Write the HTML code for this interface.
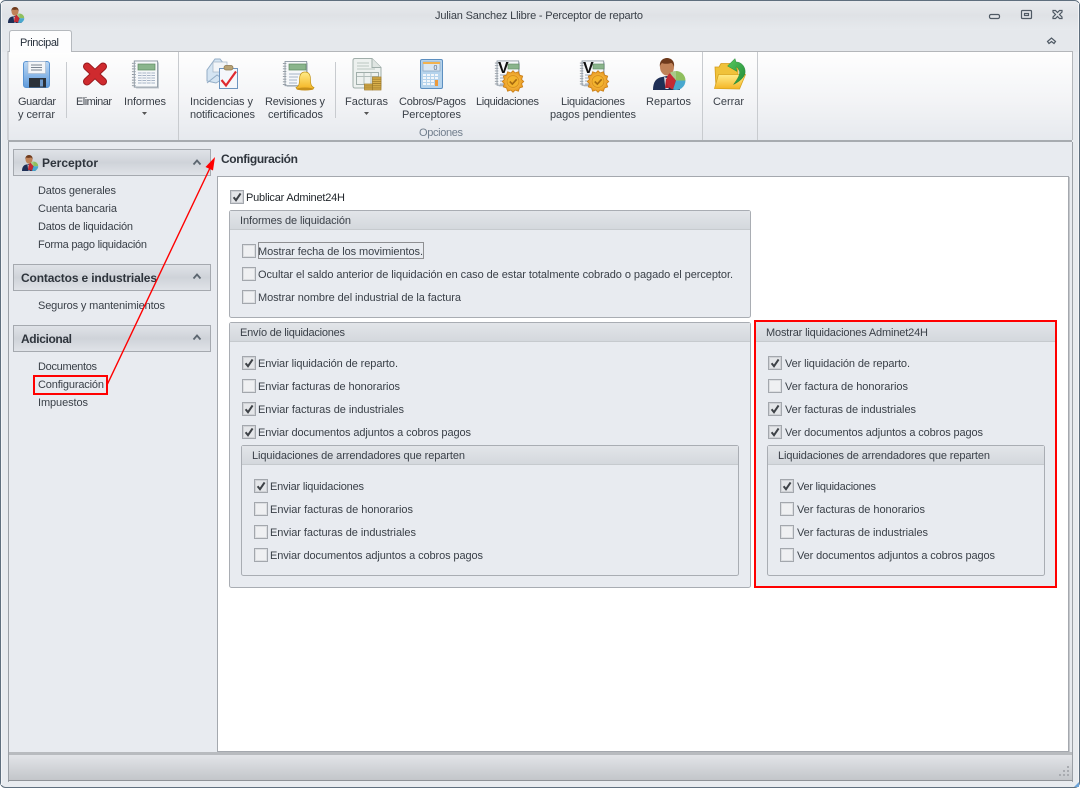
<!DOCTYPE html>
<html lang="es"><head><meta charset="utf-8"><title>Julian Sanchez Llibre - Perceptor de reparto</title>
<style>
html,body{margin:0;padding:0;background:#fff;width:1080px;height:788px;overflow:hidden}
svg{display:block}
text{font-family:"Liberation Sans",sans-serif;font-size:11px;fill:#3a4048;white-space:pre}
.b{font-weight:bold;font-size:12px;fill:#2e343c}
</style></head><body>
<svg width="1080" height="788" viewBox="0 0 1080 788" xmlns="http://www.w3.org/2000/svg">
<defs>
<linearGradient id="tb" x1="0" y1="0" x2="0" y2="1"><stop offset="0" stop-color="#e9ebee"/><stop offset=".5" stop-color="#dfe2e6"/><stop offset="1" stop-color="#e6e9ed"/></linearGradient>
<linearGradient id="rb" x1="0" y1="0" x2="0" y2="1"><stop offset="0" stop-color="#fefefe"/><stop offset=".55" stop-color="#f3f4f6"/><stop offset="1" stop-color="#e6e9ee"/></linearGradient>
<linearGradient id="hd" x1="0" y1="0" x2="0" y2="1"><stop offset="0" stop-color="#e0e3e8"/><stop offset=".5" stop-color="#cfd3d9"/><stop offset="1" stop-color="#e0e3e8"/></linearGradient>
<linearGradient id="gh" x1="0" y1="0" x2="0" y2="1"><stop offset="0" stop-color="#e2e5e9"/><stop offset="1" stop-color="#d4d8dd"/></linearGradient>
<linearGradient id="st" x1="0" y1="0" x2="0" y2="1"><stop offset="0" stop-color="#e2e4e8"/><stop offset="1" stop-color="#c3c6ca"/></linearGradient>
<linearGradient id="blue" x1="0" y1="0" x2="0" y2="1"><stop offset="0" stop-color="#bcd8f4"/><stop offset="1" stop-color="#5f9bdc"/></linearGradient>
<linearGradient id="gold" x1="0" y1="0" x2="0" y2="1"><stop offset="0" stop-color="#ffec88"/><stop offset="1" stop-color="#f4b424"/></linearGradient>
<linearGradient id="grn" x1="0" y1="0" x2="1" y2="1"><stop offset="0" stop-color="#58c95e"/><stop offset="1" stop-color="#1f8a38"/></linearGradient>
<linearGradient id="red" x1="0" y1="0" x2="0" y2="1"><stop offset="0" stop-color="#e04040"/><stop offset="1" stop-color="#b81c20"/></linearGradient>
<radialGradient id="bad"><stop offset="0" stop-color="#ffd75e"/><stop offset="1" stop-color="#e8961e"/></radialGradient>

<symbol id="cb" viewBox="0 0 14 14" overflow="visible"><rect x=".5" y=".5" width="13" height="13" fill="#eceef1" stroke="#a3a7ad"/><rect x="1.500" y="1.500" width="11" height="11" fill="#eff0f2" stroke="#dcdee1"/></symbol>
<symbol id="cc" viewBox="0 0 14 14" overflow="visible"><rect x=".5" y=".5" width="13" height="13" fill="#dfe1e4" stroke="#a3a7ad"/><rect x="1.500" y="1.500" width="11" height="11" fill="#e4e6e9" stroke="#d0d2d6"/><path d="M3.600 7.200L6 10.200 10.600 3.400" fill="none" stroke="#3e4247" stroke-width="2"/></symbol>

<symbol id="note" viewBox="0 0 30 30" overflow="visible">
<rect x="3.500" y=".5" width="25" height="28" fill="#f6f8fa" stroke="#8a95a0"/>
<path d="M29.500 2v27.500h-24" fill="none" stroke="#c0c7ce"/>
<path d="M1 3h4M1 6h4M1 9h4M1 12h4M1 15h4M1 18h4M1 21h4M1 24h4M1 27h4" stroke="#8a939c" stroke-width="1" stroke-dasharray="2 1"/>
</symbol>
<symbol id="liq" viewBox="0 0 30 30" overflow="visible">
<use href="#note" x="0" y="0" width="26" height="27"/>
<text x="4" y="13" style="font-size:16px;font-weight:bold;fill:#111">V</text>
<rect x="14" y="4" width="11" height="5" fill="#8ab48c" stroke="#5f8a62" stroke-width=".6"/>
<path d="M6 15h9M6 18h7M6 21h6M6 24h6" stroke="#9aa8bc"/>
<g transform="translate(19 21.500) scale(1.080) translate(-20 -20)">
<path d="M20 10l2 2 3-1 1 3 3 1-1 3 2 2-2 2 1 3-3 1-1 3-3-1-2 2-2-2-3 1-1-3-3-1 1-3-2-2 2-2-1-3 3-1 1-3 3 1z" fill="url(#bad)" stroke="#c87e18" stroke-width=".7"/>
<circle cx="20" cy="20" r="5.500" fill="#f3b42e" stroke="#d68e1c" stroke-width=".7"/>
<path d="M17 20l2.400 2.400 4-4.400" fill="none" stroke="#a66a10" stroke-width="1.500"/>
</g>
</symbol>
<symbol id="man" viewBox="0 0 32 32" overflow="visible">
<path d="M0 32c0-8 3-12 9-13l5-1 5 1c4 1 7 4 8 13z" fill="#1f2f56"/>
<path d="M11 19l3 1 3-1-1.500 12h-3z" fill="#d8dce4"/>
<path d="M13 21h2l1 9h-4z" fill="#b8222c"/>
<ellipse cx="14" cy="9" rx="7" ry="8.500" fill="#c08258"/>
<path d="M7 9c-1-6 3-9 7-9s8 3 7 9c-1-3-2-4-3-4-3 1-7 1-9 0-1 1-2 2-2 4z" fill="#6e3a1c"/>
<path d="M23 22.500L20 31.500A9.500 9.500 0 0 1 17 15z" fill="#c42a34"/>
<path d="M23 22.500V13A9.500 9.500 0 0 1 32.500 22.500z" fill="#8fbf5e"/>
<path d="M17 15A9.500 9.500 0 0 1 23 13V22.500z" fill="#a9c98a"/>
<path d="M23 22.500H32.500A9.500 9.500 0 0 1 20 31.500z" fill="#49a8cf"/>
</symbol>
</defs>

<!-- window -->
<rect x=".5" y=".5" width="1079" height="787" rx="5" fill="#e8ebef" stroke="#5f6f7e"/>
<path d="M1 6Q1 1 6 1H1074Q1079 1 1079 6V30H1Z" fill="url(#tb)"/>
<rect x="1" y="30" width="1078" height="22" fill="#e5e8ec"/>
<path d="M1.500 3v782" stroke="#f4f5f7"/><path d="M1078.500 3v782" stroke="#f4f5f7"/>

<!-- title -->
<text x="435" y="19" textLength="208">Julian Sanchez Llibre - Perceptor de reparto</text>
<use href="#man" x="8" y="7" width="16" height="16"/>
<g fill="none" stroke="#4f5964" stroke-width="1.200">
<rect x="989.500" y="14.500" width="10" height="4" rx="1.500"/>
<rect x="1021.500" y="10.500" width="10" height="8" rx="1"/><rect x="1024.500" y="13.500" width="4" height="2"/>
<path d="M1053 10.500h2.500l2 2 2-2h2.500v1.500l-2.500 2.500 2.500 2.500v1.500h-2.500l-2-2-2 2H1053v-1.500l2.500-2.500-2.500-2.500z"/>
<path d="M1047.500 41.500l4-3.500 4 3.500-1.500 2-2.500-2-2.500 2z"/>
</g>

<!-- ribbon -->
<rect x="8" y="51.500" width="1064" height="89" fill="url(#rb)"/>
<path d="M8 140V51.500H1072.500V140" fill="none" stroke="#b3b6ba"/>
<rect x="8" y="140" width="1064" height="2" fill="#a7abb0"/>
<path d="M9.500 52V33Q9.500 30.500 12 30.500H69Q71.500 30.500 71.500 33V52" fill="#fdfdfe" stroke="#b5b9be"/>
<rect x="10" y="49" width="61" height="4" fill="#fdfdfe"/>
<text x="20" y="46" textLength="39" style="fill:#27303c">Principal</text>
<g stroke="#c8cbcf"><path d="M178.500 52v88M702.500 52v88M757.500 52v88"/><path d="M66.500 62v56M335.500 62v56"/></g>

<!-- floppy -->
<rect x="23.500" y="61.500" width="26" height="26" rx="2.500" fill="url(#blue)" stroke="#5a94d2"/>
<rect x="28" y="61.500" width="17.500" height="12" fill="#f4f6f8" stroke="#a9b8c8" stroke-width=".6"/>
<path d="M31 65h11M31 67.500h11M31 70h11" stroke="#7a8490"/>
<rect x="29" y="78" width="17" height="9.500" fill="#2b3138"/><rect x="40" y="79.500" width="3" height="7" fill="#6e98c8"/>
<!-- X -->
<path d="M87 66.500L103 81.500M103 66.500L87 81.500" stroke="#98181c" stroke-width="8" stroke-linecap="round" transform="translate(0 0)"/>
<path d="M87 66.500L103 81.500M103 66.500L87 81.500" stroke="url(#red)" stroke-width="6" stroke-linecap="round" style="stroke:#cf2a2e"/>
<!-- informes -->
<use href="#note" x="131" y="60" width="28" height="29"/>
<rect x="138" y="64" width="17" height="6" fill="#8ab58c" stroke="#5f8a62" stroke-width=".7"/>
<g stroke="#a7b4c6"><path d="M138 73h17M138 75.500h17M138 78h17M138 80.500h17M138 83h17"/></g><path d="M142 72v12M146.500 72v12M151 72v12" stroke="#e8ecf1"/>
<!-- incidencias -->
<path d="M207 70l8-11 5 0 8 10v7l-12 7-9-2z" fill="#d4e4f2" stroke="#93adc6"/>
<rect x="213" y="62" width="14" height="10" fill="#f2f5f8" stroke="#a4b4c4" stroke-width=".7"/>
<path d="M207 83l10-8 6 4" fill="none" stroke="#93adc6"/>
<rect x="219.500" y="68.500" width="18" height="20" fill="#f4f7fb" stroke="#6d94bf"/>
<rect x="224" y="65.500" width="9" height="4.500" rx="2" fill="#b8a274" stroke="#8a7650" stroke-width=".7"/>
<path d="M221.500 80l4.500 5.500 10-14" fill="none" stroke="#df2a30" stroke-width="2.200"/>
<!-- revisiones -->
<use href="#note" x="282" y="60" width="26" height="28"/>
<rect x="289" y="64" width="17" height="6" fill="#8ab58c" stroke="#5f8a62" stroke-width=".7"/>
<path d="M289 74h12M289 77h9M289 80h8M289 83h8" stroke="#a7b4c6"/>
<path d="M296 87.500c3-1 3.500-4 3.500-8 0-5 2-7.500 5.500-7.500s5.500 2.500 5.500 7.500c0 4 .5 7 3.500 8l-1 1.500h-16z" fill="url(#gold)" stroke="#c19418" stroke-width=".7"/>
<ellipse cx="305" cy="89" rx="8.500" ry="1.500" fill="#c7901a"/>
<!-- facturas -->
<path d="M355 58.500H372l9 9V86q0 2-2 2H355q-2 0-2-2V60.500q0-2 2-2z" fill="#edf1ef" stroke="#a0aeaa"/>
<path d="M372 58.500V67.500h9" fill="#dfe5e2" stroke="#a0aeaa"/>
<path d="M357 63h12M357 66h12M357 69h18" stroke="#bcc6c2"/>
<rect x="356.500" y="72.500" width="22" height="12" fill="none" stroke="#a0aeaa"/><path d="M357 76.500h21M364 73v11M371 73v11" stroke="#b2bebb"/>
<g fill="#d9b04c" stroke="#9c7a2a" stroke-width=".7"><rect x="364.500" y="84" width="8" height="2"/><rect x="364.500" y="86" width="8" height="2"/><rect x="364.500" y="88" width="8" height="2"/><rect x="372.500" y="77" width="8.500" height="2.200"/><rect x="372.500" y="79.200" width="8.500" height="2.200"/><rect x="372.500" y="81.400" width="8.500" height="2.200"/><rect x="372.500" y="83.600" width="8.500" height="2.200"/><rect x="372.500" y="85.800" width="8.500" height="2.200"/><rect x="372.500" y="88" width="8.500" height="2"/></g>
<!-- calc -->
<rect x="420.500" y="59.500" width="22" height="29" rx="1.500" fill="#b5d3ec" stroke="#5c8fc0"/>
<rect x="423" y="62" width="17" height="9" fill="#d9e6f2" stroke="#88a2be" stroke-width=".7"/><rect x="423" y="62" width="17" height="2" fill="#f2b24e"/>
<text x="433.500" y="70" style="font-size:7px;fill:#5a6a80">0</text>
<g fill="#f2f6fa"><rect x="423" y="74" width="3" height="2"/><rect x="427" y="74" width="3" height="2"/><rect x="431" y="74" width="3" height="2"/><rect x="435" y="74" width="3" height="2"/><rect x="423" y="77" width="3" height="2"/><rect x="427" y="77" width="3" height="2"/><rect x="431" y="77" width="3" height="2"/><rect x="435" y="77" width="3" height="2"/><rect x="423" y="80" width="3" height="2"/><rect x="427" y="80" width="3" height="2"/><rect x="431" y="80" width="3" height="2"/><rect x="423" y="83" width="3" height="2"/><rect x="427" y="83" width="3" height="2"/><rect x="431" y="83" width="3" height="2"/></g>
<rect x="435" y="80" width="3" height="6" fill="#ec9a3c"/>
<!-- liquidaciones -->
<use href="#liq" x="494" y="60" width="30" height="30"/>
<use href="#liq" x="579" y="60" width="30" height="30"/>
<use href="#man" x="653" y="58" width="32" height="32"/>
<!-- cerrar -->
<path d="M716 88l-1-21h4l2-3.500h9l2 3.500h6v21z" fill="#f0c23a" stroke="#d49c1c" stroke-width=".8"/>
<path d="M714.500 88.500l4-14h27l-6 14.500z" fill="url(#gold)" stroke="#d8a41e" stroke-width=".8"/>
<path d="M727.500 66L735 58.500 736 62C742 62 746 67.500 745 73.500 744 78 738.500 82 733.500 84.500 737.500 79 741 74 739 70 738 68 737 67 736 67L737 71.500Z" fill="url(#grn)" stroke="#1d7c30" stroke-width=".4"/>

<!-- ribbon labels -->
<g style="fill:#3a4048">
<text x="18" y="105" textLength="38">Guardar</text><text x="18" y="118" textLength="37">y cerrar</text>
<text x="76" y="105" textLength="36">Eliminar</text>
<text x="124" y="105" textLength="42">Informes</text>
<text x="190" y="105" textLength="63">Incidencias y</text><text x="190" y="118" textLength="65">notificaciones</text>
<text x="265" y="105" textLength="60">Revisiones y</text><text x="268" y="118" textLength="55">certificados</text>
<text x="345" y="105" textLength="43">Facturas</text>
<text x="399" y="105" textLength="67">Cobros/Pagos</text><text x="402" y="118" textLength="59">Perceptores</text>
<text x="476" y="105" textLength="63">Liquidaciones</text>
<text x="561" y="105" textLength="64">Liquidaciones</text><text x="550" y="118" textLength="86">pagos pendientes</text>
<text x="646" y="105" textLength="45">Repartos</text>
<text x="713" y="105" textLength="31">Cerrar</text>
<text x="419" y="136" textLength="44" style="fill:#727f8e">Opciones</text>
</g>
<path d="M142 112h5l-2.500 3zM364 112h5l-2.500 3z" fill="#555"/>

<!-- body frame -->
<rect x="8" y="142" width="1065" height="614" fill="#e8ebf0"/>
<rect x="2" y="142" width="6" height="640" fill="#e8ebef"/><rect x="1073" y="142" width="5" height="640" fill="#e8ebef"/>
<path d="M8.500 142v640M1072.500 142v640" stroke="#9ba0a6"/>
<rect x="217.500" y="176.500" width="851" height="575" fill="#fff" stroke="#a4a8ae"/>
<path d="M1069.500 177v575" stroke="#c4c7cb"/>
<rect x="9" y="752" width="1063" height="3" fill="#b8bbbf"/>
<rect x="9" y="755" width="1063" height="25" fill="url(#st)"/>
<path d="M8 780.500h1065" stroke="#8e9297"/>
<g fill="#a8abb0"><rect x="1067" y="766" width="2" height="2"/><rect x="1063" y="770" width="2" height="2"/><rect x="1067" y="770" width="2" height="2"/><rect x="1059" y="774" width="2" height="2"/><rect x="1063" y="774" width="2" height="2"/><rect x="1067" y="774" width="2" height="2"/></g>
<path d="M1079 782v5h-5z" fill="#6ba3d8"/>

<!-- left nav -->
<g fill="url(#hd)" stroke="#a5a9af">
<rect x="13.500" y="149.500" width="197" height="26"/><rect x="13.500" y="264.500" width="197" height="26"/><rect x="13.500" y="325.500" width="197" height="26"/></g>
<use href="#man" x="22" y="155" width="16" height="16"/>
<text class="b" x="42" y="167" textLength="56">Perceptor</text>
<text class="b" x="21" y="282" textLength="136">Contactos e industriales</text>
<text class="b" x="21" y="343" textLength="51">Adicional</text>
<path d="M193.500 164.500l3.500-4 3.500 4M193.500 278.500l3.500-4 3.500 4M193.500 339.500l3.500-4 3.500 4" fill="none" stroke="#5c6670" stroke-width="1.800"/>
<text x="38" y="194" textLength="78">Datos generales</text>
<text x="38" y="212" textLength="79">Cuenta bancaria</text>
<text x="38" y="230" textLength="95">Datos de liquidación</text>
<text x="38" y="248" textLength="109">Forma pago liquidación</text>
<text x="38" y="309" textLength="127">Seguros y mantenimientos</text>
<text x="38" y="370" textLength="59">Documentos</text>
<text x="38" y="388" textLength="66">Configuración</text>
<text x="38" y="406" textLength="50">Impuestos</text>

<text class="b" x="221" y="163" textLength="77">Configuración</text>

<!-- groups -->
<g fill="#e8ebf0" stroke="#a9adb3">
<rect x="229.500" y="210.500" width="521" height="107" rx="2"/>
<rect x="229.500" y="322.500" width="521" height="265" rx="2"/>
<rect x="241.500" y="445.500" width="497" height="130" rx="2"/>
</g>
<rect x="756" y="322" width="299" height="264" fill="#e8ebf0"/>
<rect x="767.500" y="445.500" width="277" height="130" rx="2" fill="#e8ebf0" stroke="#a9adb3"/>
<g fill="url(#gh)">
<rect x="230" y="211" width="520" height="18"/><rect x="230" y="323" width="520" height="18"/><rect x="756" y="322" width="299" height="19"/><rect x="242" y="446" width="496" height="18"/><rect x="768" y="446" width="276" height="18"/>
</g>
<path d="M230 229.500h520M230 341.500h520M756 341.500h299M242 464.500h496M768 464.500h276" stroke="#c6cace"/>

<text x="240" y="224" textLength="111">Informes de liquidación</text>
<text x="240" y="336" textLength="105">Envío de liquidaciones</text>
<text x="766" y="336" textLength="162">Mostrar liquidaciones Adminet24H</text>
<text x="252" y="459" textLength="213">Liquidaciones de arrendadores que reparten</text>
<text x="778" y="459" textLength="212">Liquidaciones de arrendadores que reparten</text>

<use href="#cc" x="230" y="190" width="14" height="14"/><text x="246" y="201" textLength="99" style="fill:#1f2429">Publicar Adminet24H</text>

<use href="#cb" x="242" y="244" width="14" height="14"/><text x="258" y="255" textLength="165">Mostrar fecha de los movimientos.</text>
<rect x="258.500" y="242.500" width="165" height="16" fill="none" stroke="#333" stroke-dasharray="1 1"/>
<use href="#cb" x="242" y="267" width="14" height="14"/><text x="258" y="278" textLength="475">Ocultar el saldo anterior de liquidación en caso de estar totalmente cobrado o pagado el perceptor.</text>
<use href="#cb" x="242" y="290" width="14" height="14"/><text x="258" y="301" textLength="203">Mostrar nombre del industrial de la factura</text>

<use href="#cc" x="242" y="356" width="14" height="14"/><text x="258" y="367" textLength="140">Enviar liquidación de reparto.</text>
<use href="#cb" x="242" y="379" width="14" height="14"/><text x="258" y="390" textLength="142">Enviar facturas de honorarios</text>
<use href="#cc" x="242" y="402" width="14" height="14"/><text x="258" y="413" textLength="146">Enviar facturas de industriales</text>
<use href="#cc" x="242" y="425" width="14" height="14"/><text x="258" y="436" textLength="213">Enviar documentos adjuntos a cobros pagos</text>

<use href="#cc" x="254" y="479" width="14" height="14"/><text x="270" y="490" textLength="94">Enviar liquidaciones</text>
<use href="#cb" x="254" y="502" width="14" height="14"/><text x="270" y="513" textLength="143">Enviar facturas de honorarios</text>
<use href="#cb" x="254" y="525" width="14" height="14"/><text x="270" y="536" textLength="146">Enviar facturas de industriales</text>
<use href="#cb" x="254" y="548" width="14" height="14"/><text x="270" y="559" textLength="213">Enviar documentos adjuntos a cobros pagos</text>

<use href="#cc" x="768" y="356" width="14" height="14"/><text x="785" y="367" textLength="125">Ver liquidación de reparto.</text>
<use href="#cb" x="768" y="379" width="14" height="14"/><text x="785" y="390" textLength="123">Ver factura de honorarios</text>
<use href="#cc" x="768" y="402" width="14" height="14"/><text x="785" y="413" textLength="131">Ver facturas de industriales</text>
<use href="#cc" x="768" y="425" width="14" height="14"/><text x="785" y="436" textLength="198">Ver documentos adjuntos a cobros pagos</text>

<use href="#cc" x="780" y="479" width="14" height="14"/><text x="797" y="490" textLength="79">Ver liquidaciones</text>
<use href="#cb" x="780" y="502" width="14" height="14"/><text x="797" y="513" textLength="128">Ver facturas de honorarios</text>
<use href="#cb" x="780" y="525" width="14" height="14"/><text x="797" y="536" textLength="131">Ver facturas de industriales</text>
<use href="#cb" x="780" y="548" width="14" height="14"/><text x="797" y="559" textLength="198">Ver documentos adjuntos a cobros pagos</text>

<!-- annotations -->
<rect x="755" y="321" width="301" height="266" fill="none" stroke="#f00" stroke-width="2"/>
<rect x="34" y="376" width="73" height="18" fill="none" stroke="#f00" stroke-width="2"/>
<path d="M107 385L210 168" stroke="#f00" stroke-width="1.400"/>
<path d="M215 157L205.500 167 213 170.500z" fill="#f00"/>
</svg>
</body></html>
